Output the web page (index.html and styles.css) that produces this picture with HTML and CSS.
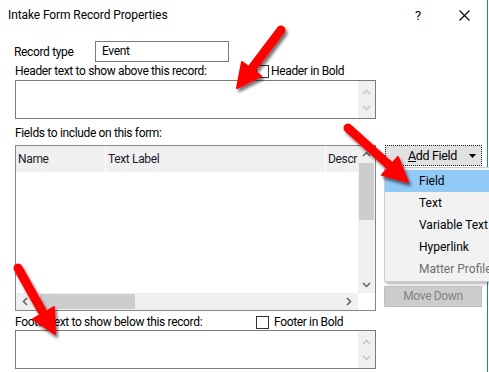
FILE: index.html
```html
<!DOCTYPE html>
<html lang="en">
<head>
  <meta charset="UTF-8">
  <title>Intake Form Record Properties</title>
  <link rel="stylesheet" href="styles.css">
</head>
<body>

  <div class="window">

    <!-- Title bar -->
    <div class="titlebar">
      <span class="title">Intake Form Record Properties</span>
      <span class="help">?</span>
      <svg class="close" width="11" height="11" viewBox="0 0 11 11">
        <path d="M0.5 0.5 L10.5 10.5 M10.5 0.5 L0.5 10.5" stroke="#000" stroke-width="1.1" fill="none"/>
      </svg>
    </div>

    <div class="content">

      <div class="left">
        <div class="record-row">
          <span class="record-label">Record type</span>
          <div class="textbox">Event</div>
        </div>

        <div class="check-row">
          <span>Header text to show above this record:</span>
          <label class="check"><span class="box"></span>Header in Bold</label>
        </div>
        <div class="memo">
          <div class="memo-fill"></div>
          <div class="vscroll disabled">
            <svg width="9" height="6" viewBox="0 0 9 6"><polyline points="1,5 4.5,1.5 8,5" fill="none" stroke="#c2c2c2" stroke-width="1.4"/></svg>
            <svg width="9" height="6" viewBox="0 0 9 6"><polyline points="1,1 4.5,4.5 8,1" fill="none" stroke="#c2c2c2" stroke-width="1.4"/></svg>
          </div>
        </div>

        <div class="section-label">Fields to include on this form:</div>
        <div class="listview">
          <div class="list-area">
            <div class="list-head">
              <div class="col col-name">Name</div>
              <div class="col col-label">Text Label</div>
              <div class="col col-desc">Descr</div>
            </div>
          </div>
          <div class="list-vscroll">
            <svg class="arrow-up" width="9" height="6" viewBox="0 0 9 6"><polyline points="1,5 4.5,1.5 8,5" fill="none" stroke="#606060" stroke-width="1.5"/></svg>
            <div class="vthumb"></div>
            <svg class="arrow-down" width="9" height="6" viewBox="0 0 9 6"><polyline points="1,1 4.5,4.5 8,1" fill="none" stroke="#606060" stroke-width="1.5"/></svg>
          </div>
          <div class="list-hscroll">
            <svg width="6" height="9" viewBox="0 0 6 9"><polyline points="5,1 1.5,4.5 5,8" fill="none" stroke="#606060" stroke-width="1.5"/></svg>
            <div class="hthumb"></div>
            <svg class="arrow-right" width="6" height="9" viewBox="0 0 6 9"><polyline points="1,1 4.5,4.5 1,8" fill="none" stroke="#606060" stroke-width="1.5"/></svg>
          </div>
          <div class="corner"></div>
        </div>

        <div class="check-row footer-row">
          <span>Footer text to show below this record:</span>
          <label class="check"><span class="box"></span>Footer in Bold</label>
        </div>
        <div class="memo">
          <div class="memo-fill"></div>
          <div class="vscroll disabled">
            <svg width="9" height="6" viewBox="0 0 9 6"><polyline points="1,5 4.5,1.5 8,5" fill="none" stroke="#c2c2c2" stroke-width="1.4"/></svg>
            <svg width="9" height="6" viewBox="0 0 9 6"><polyline points="1,1 4.5,4.5 8,1" fill="none" stroke="#c2c2c2" stroke-width="1.4"/></svg>
          </div>
        </div>
      </div>

      <div class="right">
        <div class="btn btn-split">
          <span><u>A</u>dd Field</span>
          <svg width="7" height="4" viewBox="0 0 7 4"><polygon points="0,0 7,0 3.5,4" fill="#000"/></svg>
        </div>
        <div class="btn btn-disabled">Move Down</div>
      </div>

    </div>
  </div>

  <!-- Dropdown of the Add Field button -->
  <div class="menu">
    <div class="menu-item active">Field</div>
    <div class="menu-item">Text</div>
    <div class="menu-item">Variable Text</div>
    <div class="menu-item">Hyperlink</div>
    <div class="menu-item muted">Matter Profile</div>
  </div>

  <!-- Red callout arrows drawn over the dialog -->
  <svg class="arrows" width="489" height="372" viewBox="0 0 489 372">
    <defs>
      <filter id="shadow" x="-20%" y="-20%" width="140%" height="140%">
        <feDropShadow dx="2" dy="3" stdDeviation="1.6" flood-color="#000" flood-opacity="0.55"/>
      </filter>
    </defs>
    <g filter="url(#shadow)" fill="#f00" stroke="#f00">
      <line x1="281" y1="30" x2="253" y2="67" stroke-width="9" stroke-linecap="round"/>
      <polygon points="237,88 261,76 242,62" stroke-width="2" stroke-linejoin="round"/>

      <line x1="348" y1="128" x2="389" y2="165" stroke-width="9" stroke-linecap="round"/>
      <polygon points="408,182 382,175 398,157" stroke-width="2" stroke-linejoin="round"/>

      <line x1="18" y1="268" x2="42" y2="311" stroke-width="9" stroke-linecap="round"/>
      <polygon points="55,334 33,319 54,307" stroke-width="2" stroke-linejoin="round"/>
    </g>
  </svg>

</body>
</html>
```

FILE: styles.css
```css
html, body {
  overflow: hidden;
}

body {
  margin: 0;
  font-family: Roboto, Lato, sans-serif;
  font-size: 12px;
  letter-spacing: -0.35px;
  color: #000;
  background: #fff;
  position: relative;
  width: 489px;
  height: 372px;
}

.window {
  width: 487px;
  height: 372px;
  border-right: 1px solid #1c7ed6;
  background: #fff;
}

/* title bar */
.titlebar {
  height: 30px;
  display: flex;
  align-items: center;
  padding-left: 8px;
}

.title {
  flex: 1;
  letter-spacing: -0.1px;
}

.help {
  width: 44px;
  font-size: 13px;
}

.close {
  margin-right: 17px;
}

/* body */
.content {
  display: flex;
  padding-left: 15px;
}

.left {
  width: 361px;
}

.right {
  width: 98px;
  margin-left: 8px;
  padding-top: 115px;
}

.record-row {
  display: flex;
  align-items: center;
  margin-top: 11px;
  height: 21px;
}

.record-label {
  width: 80px;
  margin-left: -1px;
  margin-right: 1px;
}

.textbox {
  width: 126px;
  height: 19px;
  border: 1px solid #7a7a7a;
  padding-left: 6px;
  line-height: 19px;
}

.check-row {
  display: flex;
  align-items: center;
  height: 18px;
}

.check-row > span {
  width: 241px;
}

.check {
  display: flex;
  align-items: center;
}

.box {
  width: 11px;
  height: 11px;
  border: 1px solid #333;
  background: #fff;
  margin-right: 2px;
}

.footer-row {
  margin-top: 3px;
  height: 16px;
}

.footer-row .box {
  margin-right: 5px;
}

.memo {
  height: 37px;
  border: 1px solid #7a7a7a;
  display: flex;
}

.memo-fill {
  flex: 1;
}

.vscroll {
  width: 17px;
  background: #f0f0f0;
  display: flex;
  flex-direction: column;
  align-items: center;
  justify-content: space-between;
  padding: 8px 0 7px;
}

.section-label {
  line-height: 16px;
  margin-top: 6px;
}

/* list view */
.listview {
  margin-top: 4px;
  height: 164px;
  border: 1px solid #828790;
  display: grid;
  grid-template-columns: 1fr 17px;
  grid-template-rows: 1fr 17px;
}

.list-head {
  display: flex;
  height: 26px;
  background: #f0f0f0;
  color: #1a1a2a;
}

.col {
  line-height: 26px;
  padding-left: 2px;
  border-right: 1px solid #fff;
  white-space: nowrap;
  overflow: hidden;
}

.col-name {
  width: 87px;
}

.col-label {
  width: 217px;
}

.col-desc {
  flex: 1;
  border-right: none;
}

.list-vscroll {
  background: #f0f0f0;
  display: flex;
  flex-direction: column;
  align-items: center;
  padding-top: 5px;
}

.vthumb {
  width: 15px;
  height: 57px;
  background: #cdcdcd;
  margin-top: 6px;
}

.arrow-down {
  margin-top: auto;
  margin-bottom: 5px;
}

.list-hscroll {
  background: #f0f0f0;
  display: flex;
  align-items: center;
  padding-left: 6px;
}

.hthumb {
  width: 95px;
  height: 15px;
  background: #cdcdcd;
  margin-left: 12px;
}

.arrow-right {
  margin-left: auto;
  margin-right: 6px;
}

.corner {
  background: #fff;
}

/* buttons */
.btn {
  height: 19px;
  line-height: 19px;
  text-align: center;
}

.btn-split {
  width: 95px;
  margin-left: 1px;
  border: 1px dotted #222;
  background: #e1e1e1;
  display: flex;
  align-items: center;
  font-size: 12.5px;
}

.btn-split span {
  flex: 1;
  padding-left: 10px;
}

.btn-split svg {
  margin-right: 5px;
}

.btn-disabled {
  margin-top: 120px;
  width: 96px;
  border: 1px solid #bfbfbf;
  background: #cccccc;
  color: #838383;
}

/* dropdown menu */
.menu {
  position: absolute;
  left: 384px;
  top: 167px;
  width: 120px;
  padding: 2px 0 1px;
  background: #f2f2f2;
  border: 1px solid #cccccc;
  box-shadow: 2px 2px 3px rgba(0,0,0,0.3);
  z-index: 2;
  letter-spacing: 0;
}

.menu-item {
  height: 22px;
  line-height: 22px;
  padding-left: 34px;
  white-space: nowrap;
}

.menu-item.active {
  background: #91c9f7;
}

.menu-item.muted {
  color: #6d6d6d;
}

.arrows {
  position: absolute;
  left: 0;
  top: 0;
  pointer-events: none;
  z-index: 3;
}
```
